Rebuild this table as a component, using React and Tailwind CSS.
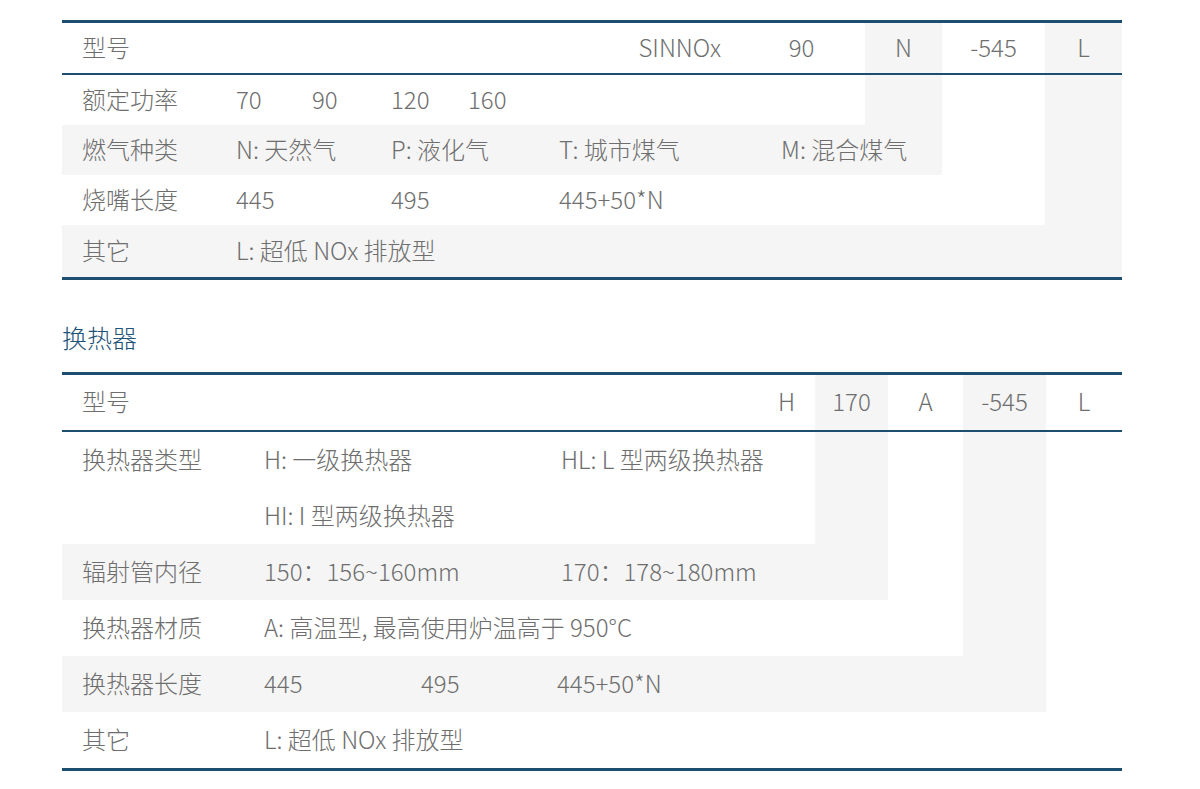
// App.jsx
import React from "react";
import clsx from "clsx";

// cellule d'une ligne : largeur fixe, fond gris optionnel
const Seg = ({ w, shade, className, children }) => (
  <div className={clsx(w, shade && "bg-[#f5f5f5]", "flex items-center shrink-0 pb-[3px]", className)}>
    {children}
  </div>
);

const Label = ({ w, children }) => (
  <div className={clsx(w, "pl-[20px] shrink-0")}>{children}</div>
);

const Item = ({ w, children }) => <div className={clsx(w, "shrink-0 whitespace-nowrap")}>{children}</div>;

function BurnerTable() {
  return (
    <div className="w-[1060px] border-t-[3px] border-b-[3px] border-[#1d4e70]">
      {/* en-tête */}
      <div className="flex h-[52px] border-b-2 border-[#1d4e70]">
        <Seg w="w-[676px]">
          <Label w="w-[174px]">型号</Label>
          <span className="ml-auto pr-[17px]">SINNOx</span>
        </Seg>
        <Seg w="w-[127px]" className="justify-center">90</Seg>
        <Seg w="w-[77px]" shade className="justify-center">N</Seg>
        <Seg w="w-[103px]" className="justify-center">-545</Seg>
        <Seg w="w-[77px]" shade className="justify-center">L</Seg>
      </div>

      <div className="flex h-[50px]">
        <Seg w="w-[803px]">
          <Label w="w-[174px]">额定功率</Label>
          <Item w="w-[76px]">70</Item>
          <Item w="w-[79px]">90</Item>
          <Item w="w-[77px]">120</Item>
          <Item w="w-[80px]">160</Item>
        </Seg>
        <Seg w="w-[77px]" shade />
        <Seg w="w-[103px]" />
        <Seg w="w-[77px]" shade />
      </div>

      <div className="flex h-[50px]">
        <Seg w="w-[880px]" shade>
          <Label w="w-[174px]">燃气种类</Label>
          <Item w="w-[155px]">N: 天然气</Item>
          <Item w="w-[168px]">P: 液化气</Item>
          <Item w="w-[222px]">T: 城市煤气</Item>
          <Item>M: 混合煤气</Item>
        </Seg>
        <Seg w="w-[103px]" />
        <Seg w="w-[77px]" shade />
      </div>

      <div className="flex h-[50px]">
        <Seg w="w-[983px]">
          <Label w="w-[174px]">烧嘴长度</Label>
          <Item w="w-[155px]">445</Item>
          <Item w="w-[168px]">495</Item>
          <Item>445+50*N</Item>
        </Seg>
        <Seg w="w-[77px]" shade />
      </div>

      <div className="flex h-[52px]">
        <Seg w="w-[1060px]" shade>
          <Label w="w-[174px]">其它</Label>
          <Item>L: 超低 NOx 排放型</Item>
        </Seg>
      </div>
    </div>
  );
}

function ExchangerTable() {
  return (
    <div className="w-[1060px] border-t-[3px] border-b-[3px] border-[#1d4e70]">
      <div className="flex h-[57px] border-b-2 border-[#1d4e70]">
        <Seg w="w-[753px]">
          <Label w="w-[202px]">型号</Label>
          <span className="ml-auto pr-[20px]">H</span>
        </Seg>
        <Seg w="w-[73px]" shade className="justify-center">170</Seg>
        <Seg w="w-[75px]" className="justify-center">A</Seg>
        <Seg w="w-[83px]" shade className="justify-center">-545</Seg>
        <Seg w="w-[76px]" className="justify-center">L</Seg>
      </div>

      <div className="flex h-[112px]">
        <Seg w="w-[753px]" className="flex-col !items-stretch !pb-0">
          <div className="flex items-center h-[56px] pb-[3px]">
            <Label w="w-[202px]">换热器类型</Label>
            <Item w="w-[297px]">H: 一级换热器</Item>
            <Item>HL: L 型两级换热器</Item>
          </div>
          <div className="flex items-center h-[56px] pb-[3px]">
            <Label w="w-[202px]" />
            <Item>HI: I 型两级换热器</Item>
          </div>
        </Seg>
        <Seg w="w-[73px]" shade />
        <Seg w="w-[75px]" />
        <Seg w="w-[83px]" shade />
        <Seg w="w-[76px]" />
      </div>

      <div className="flex h-[56px]">
        <Seg w="w-[826px]" shade>
          <Label w="w-[202px]">辐射管内径</Label>
          <Item w="w-[297px]">150：156~160mm</Item>
          <Item>170：178~180mm</Item>
        </Seg>
        <Seg w="w-[75px]" />
        <Seg w="w-[83px]" shade />
        <Seg w="w-[76px]" />
      </div>

      <div className="flex h-[56px]">
        <Seg w="w-[901px]">
          <Label w="w-[202px]">换热器材质</Label>
          <Item>A: 高温型, 最高使用炉温高于 950°C</Item>
        </Seg>
        <Seg w="w-[83px]" shade />
        <Seg w="w-[76px]" />
      </div>

      <div className="flex h-[56px]">
        <Seg w="w-[984px]" shade>
          <Label w="w-[202px]">换热器长度</Label>
          <Item w="w-[157px]">445</Item>
          <Item w="w-[136px]">495</Item>
          <Item>445+50*N</Item>
        </Seg>
        <Seg w="w-[76px]" />
      </div>

      <div className="flex h-[56px]">
        <Seg w="w-[1060px]">
          <Label w="w-[202px]">其它</Label>
          <Item>L: 超低 NOx 排放型</Item>
        </Seg>
      </div>
    </div>
  );
}

export default function App() {
  return (
    <div className="w-[1200px] h-[789px] bg-white pl-[62px] pt-[20px] text-[24px] font-light text-[#6e6e6e] font-['Noto_Sans_CJK_SC','Noto_Sans',sans-serif] leading-none">
      <BurnerTable />
      <h2 className="mt-[43px] mb-[17px] h-[32px] pb-[4px] flex items-center text-[25px] font-light text-[#1f5478]">换热器</h2>
      <ExchangerTable />
    </div>
  );
}
